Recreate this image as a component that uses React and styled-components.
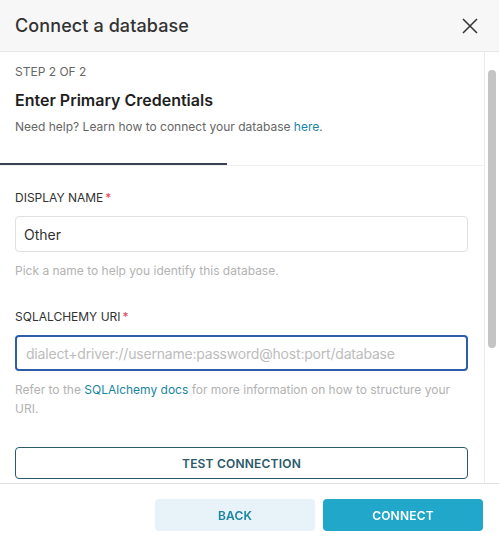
import React from 'react';
import styled, { createGlobalStyle } from 'styled-components';

const GlobalStyle = createGlobalStyle`
  html, body {
    margin: 0;
    padding: 0;
    background: #ffffff;
  }
  body {
    font-family: Inter, "Liberation Sans", sans-serif;
    color: #323232;
  }
  * { box-sizing: border-box; }
`;

const Modal = styled.div`
  width: 499px;
  height: 547px;
  display: flex;
  flex-direction: column;
  background: #fff;
  overflow: hidden;
`;

const Header = styled.div`
  height: 52px;
  flex-shrink: 0;
  display: flex;
  align-items: center;
  justify-content: space-between;
  padding: 0 20px 0 15px;
  background: #f7f7f7;
  border-bottom: 1px solid #e6e6e6;
`;

const Title = styled.h1`
  margin: 0;
  font-size: 18px;
  font-weight: 500;
  color: #323232;
  letter-spacing: 0.1px;
`;

const CloseButton = styled.button`
  border: 0;
  background: none;
  padding: 0;
  width: 18px;
  height: 18px;
  display: flex;
  align-items: center;
  justify-content: center;
  cursor: pointer;
`;

const Body = styled.div`
  flex: 1;
  min-height: 0;
  display: flex;
`;

const Scroller = styled.div`
  flex: 1;
  min-width: 0;
  overflow: hidden;
`;

const ScrollTrack = styled.div`
  width: 15px;
  flex-shrink: 0;
  border-left: 1px solid #ebebeb;
  padding: 18px 3px 0 3px;
`;

const ScrollThumb = styled.div`
  width: 8px;
  height: 278px;
  border-radius: 4px;
  background: #c4c4c4;
`;

const Intro = styled.div`
  padding: 12px 15px 0;
`;

const Step = styled.div`
  font-size: 12px;
  line-height: 16px;
  color: #666;
  text-transform: uppercase;
`;

const Heading = styled.h2`
  margin: 9px 0 0;
  font-size: 16px;
  line-height: 22px;
  font-weight: 600;
  color: #1f1f1f;
`;

const Help = styled.p`
  margin: 8px 0 0;
  font-size: 12px;
  line-height: 16px;
  color: #666;
`;

const Link = styled.a`
  color: #1a85a0;
  text-decoration: none;
`;

const TabBar = styled.div`
  margin-top: 28px;
  height: 2px;
  border-bottom: 1px solid #f0f0f0;
  display: flex;
  box-sizing: content-box;
`;

const ActiveTab = styled.div`
  width: 227px;
  height: 2px;
  background: #3b4252;
  margin-bottom: -1px;
`;

const Form = styled.div`
  padding: 24px 16px 40px 15px;
  display: flex;
  flex-direction: column;
`;

const Field = styled.div`
  display: flex;
  flex-direction: column;
  margin-bottom: ${(p) => p.$gap}px;
`;

const Label = styled.label`
  display: block;
  font-size: 12px;
  line-height: 16px;
  color: #323232;
  text-transform: uppercase;
  margin-bottom: 10px;

  span {
    color: #e04355;
    margin-left: 2px;
  }
`;

const Input = styled.input`
  display: block;
  margin: 0;
  height: 36px;
  width: 100%;
  border: ${(p) => (p.$focused ? '2px solid #2d5dab' : '1px solid #e0e0e0')};
  border-radius: 4px;
  padding: 0 ${(p) => (p.$focused ? 9 : 8)}px;
  font-family: Inter, "Liberation Sans", sans-serif;
  font-size: 14px;
  color: #323232;
  caret-color: #222;
  outline: none;
  background: #fff;

  &::placeholder {
    color: #bcbcbc;
    letter-spacing: -0.2px;
  }
`;

const Hint = styled.div`
  margin-top: 9px;
  font-size: 12px;
  line-height: 19px;
  color: #b2b2b2;
`;

const OutlineButton = styled.button`
  height: 32px;
  width: 100%;
  border: 1px solid #2a5a6b;
  border-radius: 4px;
  background: #fff;
  color: #2a5a6b;
  font-family: Inter, "Liberation Sans", sans-serif;
  font-size: 12px;
  font-weight: 600;
  letter-spacing: 0.2px;
  cursor: pointer;
`;

const Footer = styled.div`
  flex-shrink: 0;
  height: 64px;
  border-top: 1px solid #e0e0e0;
  display: flex;
  align-items: center;
  justify-content: flex-end;
  gap: 8px;
  padding: 0 16px 1px;
`;

const FooterButton = styled.button`
  width: 160px;
  height: 32px;
  border: 0;
  border-radius: 4px;
  background: ${(p) => (p.$primary ? '#20a7c9' : '#e7f3f8')};
  color: ${(p) => (p.$primary ? '#ffffff' : '#1a85a0')};
  font-family: Inter, "Liberation Sans", sans-serif;
  font-size: 12px;
  font-weight: 600;
  letter-spacing: 0.2px;
  cursor: pointer;
`;

function CloseIcon() {
  return (
    <svg width="16" height="16" viewBox="0 0 16 16" fill="none">
      <path d="M1 1L15 15M15 1L1 15" stroke="#333" strokeWidth="1.5" />
    </svg>
  );
}

export default function App() {
  return (
    <>
      <GlobalStyle />
      <Modal>
        <Header>
          <Title>Connect a database</Title>
          <CloseButton aria-label="Close">
            <CloseIcon />
          </CloseButton>
        </Header>
        <Body>
          <Scroller>
            <Intro>
              <Step>Step 2 of 2</Step>
              <Heading>Enter Primary Credentials</Heading>
              <Help>
                Need help? Learn how to connect your database <Link href="#">here</Link>.
              </Help>
            </Intro>
            <TabBar>
              <ActiveTab />
            </TabBar>
            <Form>
              <Field $gap={29}>
                <Label>Display name<span>*</span></Label>
                <Input defaultValue="Other" />
                <Hint>Pick a name to help you identify this database.</Hint>
              </Field>
              <Field $gap={29}>
                <Label>SQLAlchemy URI<span>*</span></Label>
                <Input $focused autoFocus placeholder="dialect+driver://username:password@host:port/database" />
                <Hint>
                  Refer to the <Link href="#">SQLAlchemy docs</Link> for more information on how to structure your URI.
                </Hint>
              </Field>
              <OutlineButton>TEST CONNECTION</OutlineButton>
            </Form>
          </Scroller>
          <ScrollTrack>
            <ScrollThumb />
          </ScrollTrack>
        </Body>
        <Footer>
          <FooterButton>BACK</FooterButton>
          <FooterButton $primary>CONNECT</FooterButton>
        </Footer>
      </Modal>
    </>
  );
}
